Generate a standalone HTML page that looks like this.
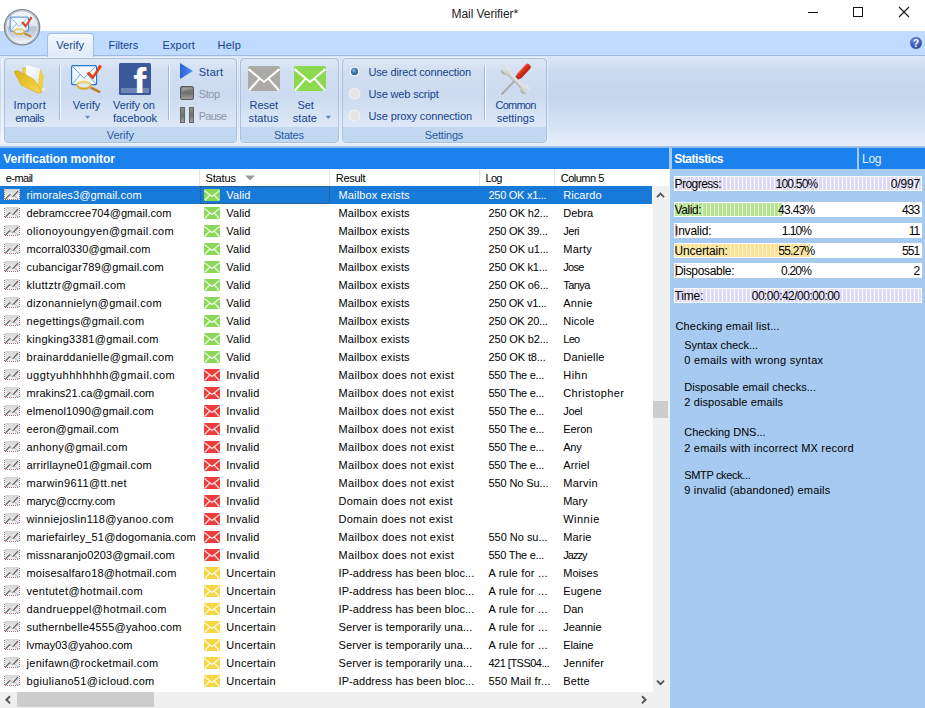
<!DOCTYPE html>
<html><head><meta charset="utf-8"><title>Mail Verifier*</title>
<style>
html,body{margin:0;padding:0}
body{width:925px;height:708px;overflow:hidden;position:relative;background:#fff;font-family:"Liberation Sans",sans-serif;font-size:11px;color:#15428b}
.abs,.tx,svg.a{position:absolute}
.tx{white-space:pre}
#title{left:0;top:0;width:925px;height:31px;background:#fff}
#tabs{left:0;top:31px;width:925px;height:25px;background:#bfdbff}
#tabv{position:absolute;left:47px;top:33px;width:45px;height:23px;border:1px solid #a3bfe4;border-bottom:none;border-radius:4px 4px 0 0;background:linear-gradient(#f3f8fe,#dfeaf8)}
#ribbon{left:0;top:55px;width:925px;height:93px;background:linear-gradient(#dde8f6 0%,#cbdbef 16%,#c4d5ec 45%,#d6e4f5 78%,#e3edfa 92%,#e6effb 100%);border-top:1px solid #9ebae1;box-sizing:border-box}
.grp{position:absolute;top:58px;height:85px;border:1px solid #a9c1de;border-radius:4px;box-sizing:border-box;background:linear-gradient(#dee8f5 0%,#d0def1 18%,#ccdbf0 45%,#dce8f7 80%);overflow:hidden;box-shadow:0 0 0 1px rgba(255,255,255,.45)}
.grp .lab{position:absolute;left:0;right:0;bottom:0;height:15px;background:#c2d8f0}
.vsep{position:absolute;top:65px;width:1px;height:55px;background:#a3b8d6;box-shadow:1px 0 0 rgba(255,255,255,.85)}
#vmhead{left:0;top:148px;width:669px;height:21px;background:#1b81ec}
#sthead{left:672px;top:148px;width:185px;height:21px;background:#1b81ec}
#loghead{left:859px;top:148px;width:66px;height:21px;background:#1b81ec}
#colhead{left:0;top:169px;width:669px;height:17px;background:#fff}
#colhead i{position:absolute;top:0;width:1px;height:17px;background:#e5e5e5}
#list{left:0;top:186px;width:653px;height:506px;background:#fff}
.row{position:relative;height:18px;width:652px;color:#000;font-size:11px;line-height:18px;white-space:nowrap}
.row span{position:absolute;top:0}
.row.sel{background:#1779d8;color:#fff}
.ic{position:absolute;left:4px;top:3px;width:16px;height:11px}
.env{position:absolute;left:204px;top:3px;width:16px;height:12px}
.c1{left:26px;letter-spacing:.15px}.c2{left:226px;letter-spacing:.3px}.c3{left:338px;letter-spacing:.3px}.c4{left:488px;letter-spacing:.3px}.c5{left:563px;letter-spacing:.3px}
#vs{left:653px;top:186px;width:16px;height:506px;background:#f0f0f0}
#hs{left:0;top:692px;width:669px;height:16px;background:#f0f0f0}
#right{left:669px;top:148px;width:256px;height:560px;background:#a6caf0}
.bar{position:absolute;left:674px;width:248px;height:15px;background:#fff;box-sizing:border-box;border:1px solid #fff}
.bar i{position:absolute;left:0;top:0;height:13px}
.lav{background:repeating-linear-gradient(90deg,#dcd8f6 0,#dcd8f6 3px,#fff 3px,#fff 4px)}
.grn{background:repeating-linear-gradient(90deg,#b6e48e 0,#b6e48e 3px,#e6f6d8 3px,#e6f6d8 4px)}
.yel{background:repeating-linear-gradient(90deg,#fae394 0,#fae394 3px,#fdf5d6 3px,#fdf5d6 4px)}
</style></head><body>
<div id="title" class="abs"></div>
<span class="tx" style="left:451.50px;top:7px;font-size:12px;line-height:14px;color:#222;font-weight:normal;letter-spacing:-0.058px">Mail Verifier*</span>
<svg class="a" style="left:800px;top:0" width="125" height="30" viewBox="800 0 125 30"><path d="M808 12.5H818" stroke="#111" stroke-width="1" fill="none"/><rect x="853.5" y="7.5" width="9" height="9" fill="none" stroke="#111" stroke-width="1"/><path d="M899 7L909 17M909 7L899 17" stroke="#111" stroke-width="1.1" fill="none"/></svg>
<div id="tabs" class="abs"></div>
<div id="ribbon" class="abs"></div><div class="abs" style="left:0;top:146px;width:925px;height:2px;background:linear-gradient(#a9c4e6,#8fb4e6)"></div><div class="abs" style="left:1px;top:58px;width:2px;height:86px;background:rgba(255,255,255,.55)"></div>
<div id="tabv"></div>
<span class="tx" style="left:56.25px;top:39px;font-size:11px;line-height:12px;color:#15428b;font-weight:normal;letter-spacing:0.057px">Verify</span><span class="tx" style="left:108.50px;top:39px;font-size:11px;line-height:12px;color:#15428b;font-weight:normal;letter-spacing:-0.042px">Filters</span><span class="tx" style="left:162.50px;top:39px;font-size:11px;line-height:12px;color:#15428b;font-weight:normal;letter-spacing:0.081px">Export</span><span class="tx" style="left:217.50px;top:39px;font-size:11px;line-height:12px;color:#15428b;font-weight:normal;letter-spacing:0.225px">Help</span>
<!--help icon-->
<svg class="a" style="left:908px;top:35px" width="16" height="16" viewBox="0 0 16 16"><defs><radialGradient id="hg" cx=".4" cy=".3" r=".8"><stop offset="0" stop-color="#5d86d8"/><stop offset="1" stop-color="#1f3f9c"/></radialGradient></defs><circle cx="8" cy="8" r="6.4" fill="url(#hg)" stroke="#dfe9fb" stroke-width=".8"/><text x="8" y="11.8" font-family="Liberation Sans, sans-serif" font-weight="bold" font-size="10.5" fill="#fff" text-anchor="middle">?</text></svg>
<!--orb-->
<svg class="a" style="left:2px;top:7px" width="40" height="40" viewBox="2 7 40 40"><defs><linearGradient id="og" x1="0" y1="0" x2="0" y2="1"><stop offset="0" stop-color="#f3f5f9"/><stop offset=".44" stop-color="#e2e6ee"/><stop offset=".5" stop-color="#bac3d3"/><stop offset=".78" stop-color="#cdd5e2"/><stop offset="1" stop-color="#f0f4fa"/></linearGradient><linearGradient id="or" x1="0" y1="0" x2="0" y2="1"><stop offset="0" stop-color="#c2c8d4"/><stop offset=".5" stop-color="#aab2c2"/><stop offset="1" stop-color="#dfe5ef"/></linearGradient></defs>
<circle cx="22.05" cy="27.2" r="17.7" fill="url(#or)" stroke="#7f8797" stroke-width="1.2"/><circle cx="22.05" cy="27.2" r="15.4" fill="url(#og)" stroke="#f6f8fb" stroke-opacity=".85" stroke-width=".9"/>
<g transform="translate(9.0,15.2) scale(.735)"><defs><linearGradient id="mg1" x1="0" y1="0" x2="0" y2="1"><stop offset="0" stop-color="#b9c4d2"/><stop offset=".5" stop-color="#eef2f7"/><stop offset="1" stop-color="#c3ccd8"/></linearGradient><linearGradient id="rg3" x1="0" y1="0" x2="0" y2="1"><stop offset="0" stop-color="#f3d862"/><stop offset="1" stop-color="#d9a520"/></linearGradient></defs><rect x="1.6" y="2.6" width="25" height="19" rx="1.2" fill="#f1f9ff" stroke="#2674cb" stroke-width="1.15"/><path d="M2 3 L14 15.2 L26.2 3 M2.2 21.2 L10.4 11.6 M26 21.2 L17.8 11.6" stroke="#4a8fd6" stroke-width=".8" fill="none"/><path d="M16.6 10.4 L19.2 8.6 L22.8 12.6 L29.6 1.6 L32 3.4 L23 16.6 Z" fill="#e5401d"/><path d="M21.5 25 L29.4 28.8" stroke="#b98430" stroke-width="2.5" stroke-linecap="round" fill="none"/><ellipse cx="13.9" cy="22.1" rx="6.7" ry="3.6" fill="url(#mg1)" stroke="url(#rg3)" stroke-width="2.1"/></g></svg>
<!--groups-->
<div class="grp" style="left:4px;width:233px"><div class="lab"></div></div>
<div class="grp" style="left:240px;width:99px"><div class="lab"></div></div>
<div class="grp" style="left:342px;width:205px"><div class="lab"></div></div>
<span class="tx" style="left:106.75px;top:129px;font-size:11px;line-height:12px;color:#2b589f;font-weight:normal;letter-spacing:-0.063px">Verify</span><span class="tx" style="left:274.00px;top:129px;font-size:11px;line-height:12px;color:#2b589f;font-weight:normal;letter-spacing:-0.237px">States</span><span class="tx" style="left:424.75px;top:129px;font-size:11px;line-height:12px;color:#2b589f;font-weight:normal;letter-spacing:-0.164px">Settings</span>
<div class="vsep" style="left:59px"></div><div class="vsep" style="left:168px"></div><div class="vsep" style="left:484px"></div>
<!--import folder-->
<svg class="a" style="left:14px;top:63px" width="32" height="32" viewBox="14 63 32 32"><defs><linearGradient id="fg" x1="0" y1="0" x2="1" y2="1"><stop offset="0" stop-color="#dcb116"/><stop offset=".6" stop-color="#ecc836"/><stop offset="1" stop-color="#f6da58"/></linearGradient><linearGradient id="pg" x1="0" y1="0" x2="1" y2="1"><stop offset="0" stop-color="#ffffff"/><stop offset="1" stop-color="#dfe7f3"/></linearGradient></defs>
<path d="M22 68.3 L25.5 67.6 L40 69.4 L43.2 76 L41.6 92.6 L37 90 L24 75 Z" fill="#efcf48" stroke="#cfa72a" stroke-width=".5"/>
<path d="M25.6 65 L40.2 68.4 L41 73 L37.5 87.5 L26.5 77 Z" fill="url(#pg)"/>
<path d="M40.2 68.4 L43.2 76 L41.6 92.6 L37.3 88 Z" fill="#f0cf40"/>
<path d="M14 71.6 L17.5 70.6 L33.5 79 L36 82 L41.6 92.6 L38 93.2 L21 85 Z" fill="url(#fg)" stroke="#c9a020" stroke-width=".5"/>
<path d="M42.5 88 L45.8 89.5 L42 91 Z" fill="#f4f7fb"/></svg>
<!--verify icon-->
<svg class="a" style="left:70px;top:63px" width="32" height="32" viewBox="0 0 32 32"><defs><linearGradient id="mg" x1="0" y1="0" x2="0" y2="1"><stop offset="0" stop-color="#b9c4d2"/><stop offset=".5" stop-color="#eef2f7"/><stop offset="1" stop-color="#c3ccd8"/></linearGradient><linearGradient id="rg2" x1="0" y1="0" x2="0" y2="1"><stop offset="0" stop-color="#f3d862"/><stop offset="1" stop-color="#d9a520"/></linearGradient></defs><rect x="1.6" y="2.6" width="25" height="19" rx="1.2" fill="#f1f9ff" stroke="#2674cb" stroke-width="1.15"/><path d="M2 3 L14 15.2 L26.2 3 M2.2 21.2 L10.4 11.6 M26 21.2 L17.8 11.6" stroke="#4a8fd6" stroke-width=".8" fill="none"/><path d="M16.6 10.4 L19.2 8.6 L22.8 12.6 L29.6 1.6 L32 3.4 L23 16.6 Z" fill="#e5401d"/><path d="M21.5 25 L29.4 28.8" stroke="#b98430" stroke-width="2.5" stroke-linecap="round" fill="none"/><ellipse cx="13.9" cy="22.1" rx="6.7" ry="3.6" fill="url(#mg)" stroke="url(#rg2)" stroke-width="2.1"/></svg>
<!--facebook-->
<svg class="a" style="left:119px;top:63px" width="32" height="32" viewBox="0 0 32 32"><rect width="32" height="32" rx="1.6" fill="#3b5998"/><rect x="1.9" y="25" width="28.2" height="5" fill="#6d84b4"/><clipPath id="fc"><rect x="0" y="0" width="32" height="30"/></clipPath><g clip-path="url(#fc)"><text transform="translate(14.2,34.4) scale(1.12,1.14)" x="0" y="0" font-family="Liberation Sans, sans-serif" font-weight="bold" font-size="35" fill="#fff">f</text></g></svg>
<!--play/stop/pause-->
<svg class="a" style="left:178px;top:61px" width="20" height="64" viewBox="178 61 20 64"><defs><linearGradient id="plg" x1="0" y1="0" x2="1" y2="0"><stop offset="0" stop-color="#2a62d6"/><stop offset="1" stop-color="#5590f2"/></linearGradient><linearGradient id="stg" x1="0" y1="0" x2="0" y2="1"><stop offset="0" stop-color="#8f8f8f"/><stop offset=".5" stop-color="#6f6f6f"/><stop offset="1" stop-color="#a2a2a2"/></linearGradient></defs>
<path d="M180 63 L193 71 L180 79 Z" fill="url(#plg)"/>
<rect x="180.5" y="86.5" width="13" height="13" rx="1.5" fill="url(#stg)" stroke="#585858"/><path d="M182 93.5 Q184 89 192 88.5 L192 88 L182 88 Z" fill="#fff" fill-opacity=".18"/>
<rect x="180.5" y="107.5" width="4" height="15" fill="url(#stg)" stroke="#666"/><rect x="189.5" y="107.5" width="4" height="15" fill="url(#stg)" stroke="#666"/></svg>
<span class="tx" style="left:198.75px;top:66px;font-size:11px;line-height:12px;color:#15428b;font-weight:normal;letter-spacing:0.266px">Start</span><span class="tx" style="left:198.75px;top:88px;font-size:11px;line-height:12px;color:#8d97a8;font-weight:normal;letter-spacing:-0.447px">Stop</span><span class="tx" style="left:198.75px;top:110px;font-size:11px;line-height:12px;color:#8d97a8;font-weight:normal;letter-spacing:-0.751px">Pause</span>
<span class="tx" style="left:13.50px;top:99px;font-size:11px;line-height:12px;color:#15428b;font-weight:normal;letter-spacing:0.222px">Import</span><span class="tx" style="left:15.25px;top:112px;font-size:11px;line-height:12px;color:#15428b;font-weight:normal;letter-spacing:-0.519px">emails</span>
<span class="tx" style="left:72.75px;top:99px;font-size:11px;line-height:12px;color:#15428b;font-weight:normal;letter-spacing:0.017px">Verify</span>
<span class="tx" style="left:113.00px;top:99px;font-size:11px;line-height:12px;color:#15428b;font-weight:normal;letter-spacing:-0.102px">Verify on</span><span class="tx" style="left:113.00px;top:112px;font-size:11px;line-height:12px;color:#15428b;font-weight:normal;letter-spacing:-0.094px">facebook</span>
<svg class="a" style="left:84px;top:115px" width="7" height="5" viewBox="0 0 7 5"><path d="M.8 .8 L6.2 .8 L3.5 4 Z" fill="#6a8fc4"/></svg>
<!--big envelopes-->
<svg class="a" style="left:248px;top:66px" width="32" height="25" viewBox="0 0 32 25"><rect width="32" height="25" rx="2" fill="#acaaa6"/><path d="M.5 3 L16 16 L31.5 3 M1 24.5 L11.5 12.6 M31 24.5 L20.5 12.6" stroke="#fff" stroke-width="2.1" fill="none"/></svg>
<svg class="a" style="left:294px;top:66px" width="32" height="25" viewBox="0 0 32 25"><rect width="32" height="25" rx="2" fill="#8bd94f"/><path d="M.5 3 L16 16 L31.5 3 M1 24.5 L11.5 12.6 M31 24.5 L20.5 12.6" stroke="#fff" stroke-width="2.1" fill="none"/></svg>
<span class="tx" style="left:249.50px;top:99px;font-size:11px;line-height:12px;color:#15428b;font-weight:normal;letter-spacing:-0.038px">Reset</span><span class="tx" style="left:248.50px;top:112px;font-size:11px;line-height:12px;color:#15428b;font-weight:normal;letter-spacing:0.128px">status</span><span class="tx" style="left:297.50px;top:99px;font-size:11px;line-height:12px;color:#15428b;font-weight:normal;letter-spacing:-0.158px">Set</span><span class="tx" style="left:292.75px;top:112px;font-size:11px;line-height:12px;color:#15428b;font-weight:normal;letter-spacing:0.085px">state</span>
<svg class="a" style="left:325px;top:115px" width="7" height="5" viewBox="0 0 7 5"><path d="M.6 .8 L6 .8 L3.3 4 Z" fill="#5f86bf"/></svg>
<!--radios-->
<svg class="a" style="left:346px;top:63px" width="18" height="62" viewBox="346 63 18 62"><defs><radialGradient id="rg" cx=".4" cy=".35" r=".7"><stop offset="0" stop-color="#8fc0e6"/><stop offset=".5" stop-color="#3f7cb8"/><stop offset="1" stop-color="#2a5a94"/></radialGradient></defs>
<circle cx="354.5" cy="71.4" r="5.6" fill="#f4f7fb" stroke="#c3cfdf" stroke-width=".8"/><circle cx="354.5" cy="71.4" r="3.6" fill="url(#rg)"/>
<circle cx="354.5" cy="93.6" r="5.4" fill="#e6e6e6" stroke="#eef2f8" stroke-width="1.2"/>
<circle cx="354.5" cy="115.6" r="5.4" fill="#e6e6e6" stroke="#eef2f8" stroke-width="1.2"/></svg>
<span class="tx" style="left:368.50px;top:66px;font-size:11px;line-height:12px;color:#15428b;font-weight:normal;letter-spacing:-0.164px">Use direct connection</span><span class="tx" style="left:368.50px;top:88px;font-size:11px;line-height:12px;color:#15428b;font-weight:normal;letter-spacing:-0.149px">Use web script</span><span class="tx" style="left:368.50px;top:110px;font-size:11px;line-height:12px;color:#15428b;font-weight:normal;letter-spacing:-0.120px">Use proxy connection</span>
<!--tools-->
<svg class="a" style="left:498px;top:61px" width="36" height="36" viewBox="498 61 36 36"><defs><mask id="wm"><rect x="-30" y="-30" width="60" height="60" fill="#fff"/><rect x="-20" y="-1.6" width="6.8" height="3.2" fill="#000" transform="rotate(-14 -14 0)"/><rect x="13.2" y="-1.6" width="6.8" height="3.2" fill="#000" transform="rotate(-14 14 0)"/></mask><linearGradient id="wg" x1="0" y1="0" x2="0" y2="1"><stop offset="0" stop-color="#ecece8"/><stop offset=".6" stop-color="#d2d2cc"/><stop offset="1" stop-color="#a9a9a3"/></linearGradient><linearGradient id="hg2" x1="0" y1="0" x2="0" y2="1"><stop offset="0" stop-color="#f0543c"/><stop offset=".45" stop-color="#e0341f"/><stop offset="1" stop-color="#b5200f"/></linearGradient></defs>
<path d="M517.2 78.2 L502 94" stroke="#a9a9a9" stroke-width="1.9" fill="none" stroke-linecap="round"/>
<g transform="translate(523.6,71.2) rotate(-46.5)"><rect x="-8.6" y="-3.1" width="17.4" height="6.2" rx="2.6" fill="url(#hg2)"/><path d="M-6 -1 H7 M-6 1.2 H7" stroke="#a81c0c" stroke-width=".7" fill="none"/><rect x="-9.6" y="-2.2" width="2" height="4.4" fill="#9c2a1a"/></g>
<g transform="translate(515.2,80) rotate(45)" mask="url(#wm)"><rect x="-12" y="-2.1" width="24" height="4.2" fill="url(#wg)"/><circle cx="-13.6" cy="0" r="4.7" fill="url(#wg)"/><circle cx="13.6" cy="0" r="4.7" fill="url(#wg)"/></g>
</svg>
<span class="tx" style="left:495.50px;top:99px;font-size:11px;line-height:12px;color:#15428b;font-weight:normal;letter-spacing:-0.765px">Common</span><span class="tx" style="left:496.75px;top:112px;font-size:11px;line-height:12px;color:#15428b;font-weight:normal;letter-spacing:-0.032px">settings</span>
<!--panel heads-->
<div id="right" class="abs"></div>
<div id="vmhead" class="abs"></div><div id="sthead" class="abs"></div><div id="loghead" class="abs"></div>
<span class="tx" style="left:3.25px;top:152px;font-size:12px;line-height:14px;color:#fff;font-weight:bold;letter-spacing:-0.052px">Verification monitor</span><span class="tx" style="left:674.25px;top:152px;font-size:12px;line-height:14px;color:#fff;font-weight:bold;letter-spacing:-0.451px">Statistics</span><span class="tx" style="left:862.00px;top:152px;font-size:12px;line-height:14px;color:#e4f0ff;font-weight:normal;letter-spacing:-0.266px">Log</span>
<div id="colhead" class="abs"><i style="left:199px"></i><i style="left:329px"></i><i style="left:479px"></i><i style="left:554px"></i>
<svg class="a" style="left:245px;top:6px" width="10" height="6" viewBox="0 0 10 6"><path d="M0 .5 L10 .5 L5 5.5 Z" fill="#9a9a9a"/></svg></div>
<span class="tx" style="left:5.75px;top:172px;font-size:11px;line-height:12px;color:#000;font-weight:normal;letter-spacing:-0.531px">e-mail</span><span class="tx" style="left:205.50px;top:172px;font-size:11px;line-height:12px;color:#000;font-weight:normal;letter-spacing:-0.157px">Status</span><span class="tx" style="left:335.75px;top:172px;font-size:11px;line-height:12px;color:#000;font-weight:normal;letter-spacing:-0.277px">Result</span><span class="tx" style="left:485.50px;top:172px;font-size:11px;line-height:12px;color:#000;font-weight:normal;letter-spacing:-0.730px">Log</span><span class="tx" style="left:560.75px;top:172px;font-size:11px;line-height:12px;color:#000;font-weight:normal;letter-spacing:-0.511px">Column 5</span>
<svg class="a" width="0" height="0"><defs><linearGradient id="sg" x1="0" y1="0" x2="0" y2="1"><stop offset="0" stop-color="#d6d6d6"/><stop offset="1" stop-color="#f1f1f1"/></linearGradient></defs></svg>
<div id="list" class="abs">
<div class="row sel"><svg class="ic" viewBox="0 0 16 11"><rect x="0" y="0" width="16" height="11" fill="#fff" fill-opacity=".85"/><rect x="1" y="0" width="14" height="10" fill="url(#sg)"/><path d="M9.8 6.6L14.6 10.4" stroke="#b4b4b4" stroke-width="1" fill="none"/><path d="M1.6 9.8L6 5.4M9.2 7.4L14 2.2" stroke="#555" stroke-width="1.15" fill="none"/><path d="M6 5.4L8 7.6L9.2 7.4" stroke="#999" stroke-width=".9" fill="none"/><path d="M.5 1v1M.5 5v1M.5 9v1M3 10.5h1M7 10.5h1M11 10.5h1M15.5 9v1M15.5 5v1M15.5 1v1" stroke="#c4635c" fill="none"/><path d="M.5 3v1M.5 7v1M1 10.5h1M5 10.5h1M9 10.5h1M13 10.5h1M15.5 7v1M15.5 3v1" stroke="#6f80b6" fill="none"/></svg><svg class="env" viewBox="0 0 16 12"><rect x="0" y="0" width="16" height="12" rx="1.3" fill="#8bd858"/><path d="M0.3 1.4 L8 7.4 L15.7 1.4 M0.8 11.2 L5.9 6 M15.2 11.2 L10.1 6" stroke="#fff" stroke-opacity=".88" stroke-width="1.25" fill="none"/></svg></div>
<div class="row"><svg class="ic" viewBox="0 0 16 11"><rect x="0" y="0" width="16" height="11" fill="#fff" fill-opacity=".85"/><rect x="1" y="0" width="14" height="10" fill="url(#sg)"/><path d="M9.8 6.6L14.6 10.4" stroke="#b4b4b4" stroke-width="1" fill="none"/><path d="M1.6 9.8L6 5.4M9.2 7.4L14 2.2" stroke="#555" stroke-width="1.15" fill="none"/><path d="M6 5.4L8 7.6L9.2 7.4" stroke="#999" stroke-width=".9" fill="none"/><path d="M.5 1v1M.5 5v1M.5 9v1M3 10.5h1M7 10.5h1M11 10.5h1M15.5 9v1M15.5 5v1M15.5 1v1" stroke="#c4635c" fill="none"/><path d="M.5 3v1M.5 7v1M1 10.5h1M5 10.5h1M9 10.5h1M13 10.5h1M15.5 7v1M15.5 3v1" stroke="#6f80b6" fill="none"/></svg><svg class="env" viewBox="0 0 16 12"><rect x="0" y="0" width="16" height="12" rx="1.3" fill="#8bd858"/><path d="M0.3 1.4 L8 7.4 L15.7 1.4 M0.8 11.2 L5.9 6 M15.2 11.2 L10.1 6" stroke="#fff" stroke-opacity=".88" stroke-width="1.25" fill="none"/></svg></div>
<div class="row"><svg class="ic" viewBox="0 0 16 11"><rect x="0" y="0" width="16" height="11" fill="#fff" fill-opacity=".85"/><rect x="1" y="0" width="14" height="10" fill="url(#sg)"/><path d="M9.8 6.6L14.6 10.4" stroke="#b4b4b4" stroke-width="1" fill="none"/><path d="M1.6 9.8L6 5.4M9.2 7.4L14 2.2" stroke="#555" stroke-width="1.15" fill="none"/><path d="M6 5.4L8 7.6L9.2 7.4" stroke="#999" stroke-width=".9" fill="none"/><path d="M.5 1v1M.5 5v1M.5 9v1M3 10.5h1M7 10.5h1M11 10.5h1M15.5 9v1M15.5 5v1M15.5 1v1" stroke="#c4635c" fill="none"/><path d="M.5 3v1M.5 7v1M1 10.5h1M5 10.5h1M9 10.5h1M13 10.5h1M15.5 7v1M15.5 3v1" stroke="#6f80b6" fill="none"/></svg><svg class="env" viewBox="0 0 16 12"><rect x="0" y="0" width="16" height="12" rx="1.3" fill="#8bd858"/><path d="M0.3 1.4 L8 7.4 L15.7 1.4 M0.8 11.2 L5.9 6 M15.2 11.2 L10.1 6" stroke="#fff" stroke-opacity=".88" stroke-width="1.25" fill="none"/></svg></div>
<div class="row"><svg class="ic" viewBox="0 0 16 11"><rect x="0" y="0" width="16" height="11" fill="#fff" fill-opacity=".85"/><rect x="1" y="0" width="14" height="10" fill="url(#sg)"/><path d="M9.8 6.6L14.6 10.4" stroke="#b4b4b4" stroke-width="1" fill="none"/><path d="M1.6 9.8L6 5.4M9.2 7.4L14 2.2" stroke="#555" stroke-width="1.15" fill="none"/><path d="M6 5.4L8 7.6L9.2 7.4" stroke="#999" stroke-width=".9" fill="none"/><path d="M.5 1v1M.5 5v1M.5 9v1M3 10.5h1M7 10.5h1M11 10.5h1M15.5 9v1M15.5 5v1M15.5 1v1" stroke="#c4635c" fill="none"/><path d="M.5 3v1M.5 7v1M1 10.5h1M5 10.5h1M9 10.5h1M13 10.5h1M15.5 7v1M15.5 3v1" stroke="#6f80b6" fill="none"/></svg><svg class="env" viewBox="0 0 16 12"><rect x="0" y="0" width="16" height="12" rx="1.3" fill="#8bd858"/><path d="M0.3 1.4 L8 7.4 L15.7 1.4 M0.8 11.2 L5.9 6 M15.2 11.2 L10.1 6" stroke="#fff" stroke-opacity=".88" stroke-width="1.25" fill="none"/></svg></div>
<div class="row"><svg class="ic" viewBox="0 0 16 11"><rect x="0" y="0" width="16" height="11" fill="#fff" fill-opacity=".85"/><rect x="1" y="0" width="14" height="10" fill="url(#sg)"/><path d="M9.8 6.6L14.6 10.4" stroke="#b4b4b4" stroke-width="1" fill="none"/><path d="M1.6 9.8L6 5.4M9.2 7.4L14 2.2" stroke="#555" stroke-width="1.15" fill="none"/><path d="M6 5.4L8 7.6L9.2 7.4" stroke="#999" stroke-width=".9" fill="none"/><path d="M.5 1v1M.5 5v1M.5 9v1M3 10.5h1M7 10.5h1M11 10.5h1M15.5 9v1M15.5 5v1M15.5 1v1" stroke="#c4635c" fill="none"/><path d="M.5 3v1M.5 7v1M1 10.5h1M5 10.5h1M9 10.5h1M13 10.5h1M15.5 7v1M15.5 3v1" stroke="#6f80b6" fill="none"/></svg><svg class="env" viewBox="0 0 16 12"><rect x="0" y="0" width="16" height="12" rx="1.3" fill="#8bd858"/><path d="M0.3 1.4 L8 7.4 L15.7 1.4 M0.8 11.2 L5.9 6 M15.2 11.2 L10.1 6" stroke="#fff" stroke-opacity=".88" stroke-width="1.25" fill="none"/></svg></div>
<div class="row"><svg class="ic" viewBox="0 0 16 11"><rect x="0" y="0" width="16" height="11" fill="#fff" fill-opacity=".85"/><rect x="1" y="0" width="14" height="10" fill="url(#sg)"/><path d="M9.8 6.6L14.6 10.4" stroke="#b4b4b4" stroke-width="1" fill="none"/><path d="M1.6 9.8L6 5.4M9.2 7.4L14 2.2" stroke="#555" stroke-width="1.15" fill="none"/><path d="M6 5.4L8 7.6L9.2 7.4" stroke="#999" stroke-width=".9" fill="none"/><path d="M.5 1v1M.5 5v1M.5 9v1M3 10.5h1M7 10.5h1M11 10.5h1M15.5 9v1M15.5 5v1M15.5 1v1" stroke="#c4635c" fill="none"/><path d="M.5 3v1M.5 7v1M1 10.5h1M5 10.5h1M9 10.5h1M13 10.5h1M15.5 7v1M15.5 3v1" stroke="#6f80b6" fill="none"/></svg><svg class="env" viewBox="0 0 16 12"><rect x="0" y="0" width="16" height="12" rx="1.3" fill="#8bd858"/><path d="M0.3 1.4 L8 7.4 L15.7 1.4 M0.8 11.2 L5.9 6 M15.2 11.2 L10.1 6" stroke="#fff" stroke-opacity=".88" stroke-width="1.25" fill="none"/></svg></div>
<div class="row"><svg class="ic" viewBox="0 0 16 11"><rect x="0" y="0" width="16" height="11" fill="#fff" fill-opacity=".85"/><rect x="1" y="0" width="14" height="10" fill="url(#sg)"/><path d="M9.8 6.6L14.6 10.4" stroke="#b4b4b4" stroke-width="1" fill="none"/><path d="M1.6 9.8L6 5.4M9.2 7.4L14 2.2" stroke="#555" stroke-width="1.15" fill="none"/><path d="M6 5.4L8 7.6L9.2 7.4" stroke="#999" stroke-width=".9" fill="none"/><path d="M.5 1v1M.5 5v1M.5 9v1M3 10.5h1M7 10.5h1M11 10.5h1M15.5 9v1M15.5 5v1M15.5 1v1" stroke="#c4635c" fill="none"/><path d="M.5 3v1M.5 7v1M1 10.5h1M5 10.5h1M9 10.5h1M13 10.5h1M15.5 7v1M15.5 3v1" stroke="#6f80b6" fill="none"/></svg><svg class="env" viewBox="0 0 16 12"><rect x="0" y="0" width="16" height="12" rx="1.3" fill="#8bd858"/><path d="M0.3 1.4 L8 7.4 L15.7 1.4 M0.8 11.2 L5.9 6 M15.2 11.2 L10.1 6" stroke="#fff" stroke-opacity=".88" stroke-width="1.25" fill="none"/></svg></div>
<div class="row"><svg class="ic" viewBox="0 0 16 11"><rect x="0" y="0" width="16" height="11" fill="#fff" fill-opacity=".85"/><rect x="1" y="0" width="14" height="10" fill="url(#sg)"/><path d="M9.8 6.6L14.6 10.4" stroke="#b4b4b4" stroke-width="1" fill="none"/><path d="M1.6 9.8L6 5.4M9.2 7.4L14 2.2" stroke="#555" stroke-width="1.15" fill="none"/><path d="M6 5.4L8 7.6L9.2 7.4" stroke="#999" stroke-width=".9" fill="none"/><path d="M.5 1v1M.5 5v1M.5 9v1M3 10.5h1M7 10.5h1M11 10.5h1M15.5 9v1M15.5 5v1M15.5 1v1" stroke="#c4635c" fill="none"/><path d="M.5 3v1M.5 7v1M1 10.5h1M5 10.5h1M9 10.5h1M13 10.5h1M15.5 7v1M15.5 3v1" stroke="#6f80b6" fill="none"/></svg><svg class="env" viewBox="0 0 16 12"><rect x="0" y="0" width="16" height="12" rx="1.3" fill="#8bd858"/><path d="M0.3 1.4 L8 7.4 L15.7 1.4 M0.8 11.2 L5.9 6 M15.2 11.2 L10.1 6" stroke="#fff" stroke-opacity=".88" stroke-width="1.25" fill="none"/></svg></div>
<div class="row"><svg class="ic" viewBox="0 0 16 11"><rect x="0" y="0" width="16" height="11" fill="#fff" fill-opacity=".85"/><rect x="1" y="0" width="14" height="10" fill="url(#sg)"/><path d="M9.8 6.6L14.6 10.4" stroke="#b4b4b4" stroke-width="1" fill="none"/><path d="M1.6 9.8L6 5.4M9.2 7.4L14 2.2" stroke="#555" stroke-width="1.15" fill="none"/><path d="M6 5.4L8 7.6L9.2 7.4" stroke="#999" stroke-width=".9" fill="none"/><path d="M.5 1v1M.5 5v1M.5 9v1M3 10.5h1M7 10.5h1M11 10.5h1M15.5 9v1M15.5 5v1M15.5 1v1" stroke="#c4635c" fill="none"/><path d="M.5 3v1M.5 7v1M1 10.5h1M5 10.5h1M9 10.5h1M13 10.5h1M15.5 7v1M15.5 3v1" stroke="#6f80b6" fill="none"/></svg><svg class="env" viewBox="0 0 16 12"><rect x="0" y="0" width="16" height="12" rx="1.3" fill="#8bd858"/><path d="M0.3 1.4 L8 7.4 L15.7 1.4 M0.8 11.2 L5.9 6 M15.2 11.2 L10.1 6" stroke="#fff" stroke-opacity=".88" stroke-width="1.25" fill="none"/></svg></div>
<div class="row"><svg class="ic" viewBox="0 0 16 11"><rect x="0" y="0" width="16" height="11" fill="#fff" fill-opacity=".85"/><rect x="1" y="0" width="14" height="10" fill="url(#sg)"/><path d="M9.8 6.6L14.6 10.4" stroke="#b4b4b4" stroke-width="1" fill="none"/><path d="M1.6 9.8L6 5.4M9.2 7.4L14 2.2" stroke="#555" stroke-width="1.15" fill="none"/><path d="M6 5.4L8 7.6L9.2 7.4" stroke="#999" stroke-width=".9" fill="none"/><path d="M.5 1v1M.5 5v1M.5 9v1M3 10.5h1M7 10.5h1M11 10.5h1M15.5 9v1M15.5 5v1M15.5 1v1" stroke="#c4635c" fill="none"/><path d="M.5 3v1M.5 7v1M1 10.5h1M5 10.5h1M9 10.5h1M13 10.5h1M15.5 7v1M15.5 3v1" stroke="#6f80b6" fill="none"/></svg><svg class="env" viewBox="0 0 16 12"><rect x="0" y="0" width="16" height="12" rx="1.3" fill="#8bd858"/><path d="M0.3 1.4 L8 7.4 L15.7 1.4 M0.8 11.2 L5.9 6 M15.2 11.2 L10.1 6" stroke="#fff" stroke-opacity=".88" stroke-width="1.25" fill="none"/></svg></div>
<div class="row"><svg class="ic" viewBox="0 0 16 11"><rect x="0" y="0" width="16" height="11" fill="#fff" fill-opacity=".85"/><rect x="1" y="0" width="14" height="10" fill="url(#sg)"/><path d="M9.8 6.6L14.6 10.4" stroke="#b4b4b4" stroke-width="1" fill="none"/><path d="M1.6 9.8L6 5.4M9.2 7.4L14 2.2" stroke="#555" stroke-width="1.15" fill="none"/><path d="M6 5.4L8 7.6L9.2 7.4" stroke="#999" stroke-width=".9" fill="none"/><path d="M.5 1v1M.5 5v1M.5 9v1M3 10.5h1M7 10.5h1M11 10.5h1M15.5 9v1M15.5 5v1M15.5 1v1" stroke="#c4635c" fill="none"/><path d="M.5 3v1M.5 7v1M1 10.5h1M5 10.5h1M9 10.5h1M13 10.5h1M15.5 7v1M15.5 3v1" stroke="#6f80b6" fill="none"/></svg><svg class="env" viewBox="0 0 16 12"><rect x="0" y="0" width="16" height="12" rx="1.3" fill="#ee3b3b"/><path d="M0.3 1.4 L8 7.4 L15.7 1.4 M0.8 11.2 L5.9 6 M15.2 11.2 L10.1 6" stroke="#fff" stroke-opacity=".88" stroke-width="1.25" fill="none"/></svg></div>
<div class="row"><svg class="ic" viewBox="0 0 16 11"><rect x="0" y="0" width="16" height="11" fill="#fff" fill-opacity=".85"/><rect x="1" y="0" width="14" height="10" fill="url(#sg)"/><path d="M9.8 6.6L14.6 10.4" stroke="#b4b4b4" stroke-width="1" fill="none"/><path d="M1.6 9.8L6 5.4M9.2 7.4L14 2.2" stroke="#555" stroke-width="1.15" fill="none"/><path d="M6 5.4L8 7.6L9.2 7.4" stroke="#999" stroke-width=".9" fill="none"/><path d="M.5 1v1M.5 5v1M.5 9v1M3 10.5h1M7 10.5h1M11 10.5h1M15.5 9v1M15.5 5v1M15.5 1v1" stroke="#c4635c" fill="none"/><path d="M.5 3v1M.5 7v1M1 10.5h1M5 10.5h1M9 10.5h1M13 10.5h1M15.5 7v1M15.5 3v1" stroke="#6f80b6" fill="none"/></svg><svg class="env" viewBox="0 0 16 12"><rect x="0" y="0" width="16" height="12" rx="1.3" fill="#ee3b3b"/><path d="M0.3 1.4 L8 7.4 L15.7 1.4 M0.8 11.2 L5.9 6 M15.2 11.2 L10.1 6" stroke="#fff" stroke-opacity=".88" stroke-width="1.25" fill="none"/></svg></div>
<div class="row"><svg class="ic" viewBox="0 0 16 11"><rect x="0" y="0" width="16" height="11" fill="#fff" fill-opacity=".85"/><rect x="1" y="0" width="14" height="10" fill="url(#sg)"/><path d="M9.8 6.6L14.6 10.4" stroke="#b4b4b4" stroke-width="1" fill="none"/><path d="M1.6 9.8L6 5.4M9.2 7.4L14 2.2" stroke="#555" stroke-width="1.15" fill="none"/><path d="M6 5.4L8 7.6L9.2 7.4" stroke="#999" stroke-width=".9" fill="none"/><path d="M.5 1v1M.5 5v1M.5 9v1M3 10.5h1M7 10.5h1M11 10.5h1M15.5 9v1M15.5 5v1M15.5 1v1" stroke="#c4635c" fill="none"/><path d="M.5 3v1M.5 7v1M1 10.5h1M5 10.5h1M9 10.5h1M13 10.5h1M15.5 7v1M15.5 3v1" stroke="#6f80b6" fill="none"/></svg><svg class="env" viewBox="0 0 16 12"><rect x="0" y="0" width="16" height="12" rx="1.3" fill="#ee3b3b"/><path d="M0.3 1.4 L8 7.4 L15.7 1.4 M0.8 11.2 L5.9 6 M15.2 11.2 L10.1 6" stroke="#fff" stroke-opacity=".88" stroke-width="1.25" fill="none"/></svg></div>
<div class="row"><svg class="ic" viewBox="0 0 16 11"><rect x="0" y="0" width="16" height="11" fill="#fff" fill-opacity=".85"/><rect x="1" y="0" width="14" height="10" fill="url(#sg)"/><path d="M9.8 6.6L14.6 10.4" stroke="#b4b4b4" stroke-width="1" fill="none"/><path d="M1.6 9.8L6 5.4M9.2 7.4L14 2.2" stroke="#555" stroke-width="1.15" fill="none"/><path d="M6 5.4L8 7.6L9.2 7.4" stroke="#999" stroke-width=".9" fill="none"/><path d="M.5 1v1M.5 5v1M.5 9v1M3 10.5h1M7 10.5h1M11 10.5h1M15.5 9v1M15.5 5v1M15.5 1v1" stroke="#c4635c" fill="none"/><path d="M.5 3v1M.5 7v1M1 10.5h1M5 10.5h1M9 10.5h1M13 10.5h1M15.5 7v1M15.5 3v1" stroke="#6f80b6" fill="none"/></svg><svg class="env" viewBox="0 0 16 12"><rect x="0" y="0" width="16" height="12" rx="1.3" fill="#ee3b3b"/><path d="M0.3 1.4 L8 7.4 L15.7 1.4 M0.8 11.2 L5.9 6 M15.2 11.2 L10.1 6" stroke="#fff" stroke-opacity=".88" stroke-width="1.25" fill="none"/></svg></div>
<div class="row"><svg class="ic" viewBox="0 0 16 11"><rect x="0" y="0" width="16" height="11" fill="#fff" fill-opacity=".85"/><rect x="1" y="0" width="14" height="10" fill="url(#sg)"/><path d="M9.8 6.6L14.6 10.4" stroke="#b4b4b4" stroke-width="1" fill="none"/><path d="M1.6 9.8L6 5.4M9.2 7.4L14 2.2" stroke="#555" stroke-width="1.15" fill="none"/><path d="M6 5.4L8 7.6L9.2 7.4" stroke="#999" stroke-width=".9" fill="none"/><path d="M.5 1v1M.5 5v1M.5 9v1M3 10.5h1M7 10.5h1M11 10.5h1M15.5 9v1M15.5 5v1M15.5 1v1" stroke="#c4635c" fill="none"/><path d="M.5 3v1M.5 7v1M1 10.5h1M5 10.5h1M9 10.5h1M13 10.5h1M15.5 7v1M15.5 3v1" stroke="#6f80b6" fill="none"/></svg><svg class="env" viewBox="0 0 16 12"><rect x="0" y="0" width="16" height="12" rx="1.3" fill="#ee3b3b"/><path d="M0.3 1.4 L8 7.4 L15.7 1.4 M0.8 11.2 L5.9 6 M15.2 11.2 L10.1 6" stroke="#fff" stroke-opacity=".88" stroke-width="1.25" fill="none"/></svg></div>
<div class="row"><svg class="ic" viewBox="0 0 16 11"><rect x="0" y="0" width="16" height="11" fill="#fff" fill-opacity=".85"/><rect x="1" y="0" width="14" height="10" fill="url(#sg)"/><path d="M9.8 6.6L14.6 10.4" stroke="#b4b4b4" stroke-width="1" fill="none"/><path d="M1.6 9.8L6 5.4M9.2 7.4L14 2.2" stroke="#555" stroke-width="1.15" fill="none"/><path d="M6 5.4L8 7.6L9.2 7.4" stroke="#999" stroke-width=".9" fill="none"/><path d="M.5 1v1M.5 5v1M.5 9v1M3 10.5h1M7 10.5h1M11 10.5h1M15.5 9v1M15.5 5v1M15.5 1v1" stroke="#c4635c" fill="none"/><path d="M.5 3v1M.5 7v1M1 10.5h1M5 10.5h1M9 10.5h1M13 10.5h1M15.5 7v1M15.5 3v1" stroke="#6f80b6" fill="none"/></svg><svg class="env" viewBox="0 0 16 12"><rect x="0" y="0" width="16" height="12" rx="1.3" fill="#ee3b3b"/><path d="M0.3 1.4 L8 7.4 L15.7 1.4 M0.8 11.2 L5.9 6 M15.2 11.2 L10.1 6" stroke="#fff" stroke-opacity=".88" stroke-width="1.25" fill="none"/></svg></div>
<div class="row"><svg class="ic" viewBox="0 0 16 11"><rect x="0" y="0" width="16" height="11" fill="#fff" fill-opacity=".85"/><rect x="1" y="0" width="14" height="10" fill="url(#sg)"/><path d="M9.8 6.6L14.6 10.4" stroke="#b4b4b4" stroke-width="1" fill="none"/><path d="M1.6 9.8L6 5.4M9.2 7.4L14 2.2" stroke="#555" stroke-width="1.15" fill="none"/><path d="M6 5.4L8 7.6L9.2 7.4" stroke="#999" stroke-width=".9" fill="none"/><path d="M.5 1v1M.5 5v1M.5 9v1M3 10.5h1M7 10.5h1M11 10.5h1M15.5 9v1M15.5 5v1M15.5 1v1" stroke="#c4635c" fill="none"/><path d="M.5 3v1M.5 7v1M1 10.5h1M5 10.5h1M9 10.5h1M13 10.5h1M15.5 7v1M15.5 3v1" stroke="#6f80b6" fill="none"/></svg><svg class="env" viewBox="0 0 16 12"><rect x="0" y="0" width="16" height="12" rx="1.3" fill="#ee3b3b"/><path d="M0.3 1.4 L8 7.4 L15.7 1.4 M0.8 11.2 L5.9 6 M15.2 11.2 L10.1 6" stroke="#fff" stroke-opacity=".88" stroke-width="1.25" fill="none"/></svg></div>
<div class="row"><svg class="ic" viewBox="0 0 16 11"><rect x="0" y="0" width="16" height="11" fill="#fff" fill-opacity=".85"/><rect x="1" y="0" width="14" height="10" fill="url(#sg)"/><path d="M9.8 6.6L14.6 10.4" stroke="#b4b4b4" stroke-width="1" fill="none"/><path d="M1.6 9.8L6 5.4M9.2 7.4L14 2.2" stroke="#555" stroke-width="1.15" fill="none"/><path d="M6 5.4L8 7.6L9.2 7.4" stroke="#999" stroke-width=".9" fill="none"/><path d="M.5 1v1M.5 5v1M.5 9v1M3 10.5h1M7 10.5h1M11 10.5h1M15.5 9v1M15.5 5v1M15.5 1v1" stroke="#c4635c" fill="none"/><path d="M.5 3v1M.5 7v1M1 10.5h1M5 10.5h1M9 10.5h1M13 10.5h1M15.5 7v1M15.5 3v1" stroke="#6f80b6" fill="none"/></svg><svg class="env" viewBox="0 0 16 12"><rect x="0" y="0" width="16" height="12" rx="1.3" fill="#ee3b3b"/><path d="M0.3 1.4 L8 7.4 L15.7 1.4 M0.8 11.2 L5.9 6 M15.2 11.2 L10.1 6" stroke="#fff" stroke-opacity=".88" stroke-width="1.25" fill="none"/></svg></div>
<div class="row"><svg class="ic" viewBox="0 0 16 11"><rect x="0" y="0" width="16" height="11" fill="#fff" fill-opacity=".85"/><rect x="1" y="0" width="14" height="10" fill="url(#sg)"/><path d="M9.8 6.6L14.6 10.4" stroke="#b4b4b4" stroke-width="1" fill="none"/><path d="M1.6 9.8L6 5.4M9.2 7.4L14 2.2" stroke="#555" stroke-width="1.15" fill="none"/><path d="M6 5.4L8 7.6L9.2 7.4" stroke="#999" stroke-width=".9" fill="none"/><path d="M.5 1v1M.5 5v1M.5 9v1M3 10.5h1M7 10.5h1M11 10.5h1M15.5 9v1M15.5 5v1M15.5 1v1" stroke="#c4635c" fill="none"/><path d="M.5 3v1M.5 7v1M1 10.5h1M5 10.5h1M9 10.5h1M13 10.5h1M15.5 7v1M15.5 3v1" stroke="#6f80b6" fill="none"/></svg><svg class="env" viewBox="0 0 16 12"><rect x="0" y="0" width="16" height="12" rx="1.3" fill="#ee3b3b"/><path d="M0.3 1.4 L8 7.4 L15.7 1.4 M0.8 11.2 L5.9 6 M15.2 11.2 L10.1 6" stroke="#fff" stroke-opacity=".88" stroke-width="1.25" fill="none"/></svg></div>
<div class="row"><svg class="ic" viewBox="0 0 16 11"><rect x="0" y="0" width="16" height="11" fill="#fff" fill-opacity=".85"/><rect x="1" y="0" width="14" height="10" fill="url(#sg)"/><path d="M9.8 6.6L14.6 10.4" stroke="#b4b4b4" stroke-width="1" fill="none"/><path d="M1.6 9.8L6 5.4M9.2 7.4L14 2.2" stroke="#555" stroke-width="1.15" fill="none"/><path d="M6 5.4L8 7.6L9.2 7.4" stroke="#999" stroke-width=".9" fill="none"/><path d="M.5 1v1M.5 5v1M.5 9v1M3 10.5h1M7 10.5h1M11 10.5h1M15.5 9v1M15.5 5v1M15.5 1v1" stroke="#c4635c" fill="none"/><path d="M.5 3v1M.5 7v1M1 10.5h1M5 10.5h1M9 10.5h1M13 10.5h1M15.5 7v1M15.5 3v1" stroke="#6f80b6" fill="none"/></svg><svg class="env" viewBox="0 0 16 12"><rect x="0" y="0" width="16" height="12" rx="1.3" fill="#ee3b3b"/><path d="M0.3 1.4 L8 7.4 L15.7 1.4 M0.8 11.2 L5.9 6 M15.2 11.2 L10.1 6" stroke="#fff" stroke-opacity=".88" stroke-width="1.25" fill="none"/></svg></div>
<div class="row"><svg class="ic" viewBox="0 0 16 11"><rect x="0" y="0" width="16" height="11" fill="#fff" fill-opacity=".85"/><rect x="1" y="0" width="14" height="10" fill="url(#sg)"/><path d="M9.8 6.6L14.6 10.4" stroke="#b4b4b4" stroke-width="1" fill="none"/><path d="M1.6 9.8L6 5.4M9.2 7.4L14 2.2" stroke="#555" stroke-width="1.15" fill="none"/><path d="M6 5.4L8 7.6L9.2 7.4" stroke="#999" stroke-width=".9" fill="none"/><path d="M.5 1v1M.5 5v1M.5 9v1M3 10.5h1M7 10.5h1M11 10.5h1M15.5 9v1M15.5 5v1M15.5 1v1" stroke="#c4635c" fill="none"/><path d="M.5 3v1M.5 7v1M1 10.5h1M5 10.5h1M9 10.5h1M13 10.5h1M15.5 7v1M15.5 3v1" stroke="#6f80b6" fill="none"/></svg><svg class="env" viewBox="0 0 16 12"><rect x="0" y="0" width="16" height="12" rx="1.3" fill="#ee3b3b"/><path d="M0.3 1.4 L8 7.4 L15.7 1.4 M0.8 11.2 L5.9 6 M15.2 11.2 L10.1 6" stroke="#fff" stroke-opacity=".88" stroke-width="1.25" fill="none"/></svg></div>
<div class="row"><svg class="ic" viewBox="0 0 16 11"><rect x="0" y="0" width="16" height="11" fill="#fff" fill-opacity=".85"/><rect x="1" y="0" width="14" height="10" fill="url(#sg)"/><path d="M9.8 6.6L14.6 10.4" stroke="#b4b4b4" stroke-width="1" fill="none"/><path d="M1.6 9.8L6 5.4M9.2 7.4L14 2.2" stroke="#555" stroke-width="1.15" fill="none"/><path d="M6 5.4L8 7.6L9.2 7.4" stroke="#999" stroke-width=".9" fill="none"/><path d="M.5 1v1M.5 5v1M.5 9v1M3 10.5h1M7 10.5h1M11 10.5h1M15.5 9v1M15.5 5v1M15.5 1v1" stroke="#c4635c" fill="none"/><path d="M.5 3v1M.5 7v1M1 10.5h1M5 10.5h1M9 10.5h1M13 10.5h1M15.5 7v1M15.5 3v1" stroke="#6f80b6" fill="none"/></svg><svg class="env" viewBox="0 0 16 12"><rect x="0" y="0" width="16" height="12" rx="1.3" fill="#f7d644"/><path d="M0.3 1.4 L8 7.4 L15.7 1.4 M0.8 11.2 L5.9 6 M15.2 11.2 L10.1 6" stroke="#fff" stroke-opacity=".88" stroke-width="1.25" fill="none"/></svg></div>
<div class="row"><svg class="ic" viewBox="0 0 16 11"><rect x="0" y="0" width="16" height="11" fill="#fff" fill-opacity=".85"/><rect x="1" y="0" width="14" height="10" fill="url(#sg)"/><path d="M9.8 6.6L14.6 10.4" stroke="#b4b4b4" stroke-width="1" fill="none"/><path d="M1.6 9.8L6 5.4M9.2 7.4L14 2.2" stroke="#555" stroke-width="1.15" fill="none"/><path d="M6 5.4L8 7.6L9.2 7.4" stroke="#999" stroke-width=".9" fill="none"/><path d="M.5 1v1M.5 5v1M.5 9v1M3 10.5h1M7 10.5h1M11 10.5h1M15.5 9v1M15.5 5v1M15.5 1v1" stroke="#c4635c" fill="none"/><path d="M.5 3v1M.5 7v1M1 10.5h1M5 10.5h1M9 10.5h1M13 10.5h1M15.5 7v1M15.5 3v1" stroke="#6f80b6" fill="none"/></svg><svg class="env" viewBox="0 0 16 12"><rect x="0" y="0" width="16" height="12" rx="1.3" fill="#f7d644"/><path d="M0.3 1.4 L8 7.4 L15.7 1.4 M0.8 11.2 L5.9 6 M15.2 11.2 L10.1 6" stroke="#fff" stroke-opacity=".88" stroke-width="1.25" fill="none"/></svg></div>
<div class="row"><svg class="ic" viewBox="0 0 16 11"><rect x="0" y="0" width="16" height="11" fill="#fff" fill-opacity=".85"/><rect x="1" y="0" width="14" height="10" fill="url(#sg)"/><path d="M9.8 6.6L14.6 10.4" stroke="#b4b4b4" stroke-width="1" fill="none"/><path d="M1.6 9.8L6 5.4M9.2 7.4L14 2.2" stroke="#555" stroke-width="1.15" fill="none"/><path d="M6 5.4L8 7.6L9.2 7.4" stroke="#999" stroke-width=".9" fill="none"/><path d="M.5 1v1M.5 5v1M.5 9v1M3 10.5h1M7 10.5h1M11 10.5h1M15.5 9v1M15.5 5v1M15.5 1v1" stroke="#c4635c" fill="none"/><path d="M.5 3v1M.5 7v1M1 10.5h1M5 10.5h1M9 10.5h1M13 10.5h1M15.5 7v1M15.5 3v1" stroke="#6f80b6" fill="none"/></svg><svg class="env" viewBox="0 0 16 12"><rect x="0" y="0" width="16" height="12" rx="1.3" fill="#f7d644"/><path d="M0.3 1.4 L8 7.4 L15.7 1.4 M0.8 11.2 L5.9 6 M15.2 11.2 L10.1 6" stroke="#fff" stroke-opacity=".88" stroke-width="1.25" fill="none"/></svg></div>
<div class="row"><svg class="ic" viewBox="0 0 16 11"><rect x="0" y="0" width="16" height="11" fill="#fff" fill-opacity=".85"/><rect x="1" y="0" width="14" height="10" fill="url(#sg)"/><path d="M9.8 6.6L14.6 10.4" stroke="#b4b4b4" stroke-width="1" fill="none"/><path d="M1.6 9.8L6 5.4M9.2 7.4L14 2.2" stroke="#555" stroke-width="1.15" fill="none"/><path d="M6 5.4L8 7.6L9.2 7.4" stroke="#999" stroke-width=".9" fill="none"/><path d="M.5 1v1M.5 5v1M.5 9v1M3 10.5h1M7 10.5h1M11 10.5h1M15.5 9v1M15.5 5v1M15.5 1v1" stroke="#c4635c" fill="none"/><path d="M.5 3v1M.5 7v1M1 10.5h1M5 10.5h1M9 10.5h1M13 10.5h1M15.5 7v1M15.5 3v1" stroke="#6f80b6" fill="none"/></svg><svg class="env" viewBox="0 0 16 12"><rect x="0" y="0" width="16" height="12" rx="1.3" fill="#f7d644"/><path d="M0.3 1.4 L8 7.4 L15.7 1.4 M0.8 11.2 L5.9 6 M15.2 11.2 L10.1 6" stroke="#fff" stroke-opacity=".88" stroke-width="1.25" fill="none"/></svg></div>
<div class="row"><svg class="ic" viewBox="0 0 16 11"><rect x="0" y="0" width="16" height="11" fill="#fff" fill-opacity=".85"/><rect x="1" y="0" width="14" height="10" fill="url(#sg)"/><path d="M9.8 6.6L14.6 10.4" stroke="#b4b4b4" stroke-width="1" fill="none"/><path d="M1.6 9.8L6 5.4M9.2 7.4L14 2.2" stroke="#555" stroke-width="1.15" fill="none"/><path d="M6 5.4L8 7.6L9.2 7.4" stroke="#999" stroke-width=".9" fill="none"/><path d="M.5 1v1M.5 5v1M.5 9v1M3 10.5h1M7 10.5h1M11 10.5h1M15.5 9v1M15.5 5v1M15.5 1v1" stroke="#c4635c" fill="none"/><path d="M.5 3v1M.5 7v1M1 10.5h1M5 10.5h1M9 10.5h1M13 10.5h1M15.5 7v1M15.5 3v1" stroke="#6f80b6" fill="none"/></svg><svg class="env" viewBox="0 0 16 12"><rect x="0" y="0" width="16" height="12" rx="1.3" fill="#f7d644"/><path d="M0.3 1.4 L8 7.4 L15.7 1.4 M0.8 11.2 L5.9 6 M15.2 11.2 L10.1 6" stroke="#fff" stroke-opacity=".88" stroke-width="1.25" fill="none"/></svg></div>
<div class="row"><svg class="ic" viewBox="0 0 16 11"><rect x="0" y="0" width="16" height="11" fill="#fff" fill-opacity=".85"/><rect x="1" y="0" width="14" height="10" fill="url(#sg)"/><path d="M9.8 6.6L14.6 10.4" stroke="#b4b4b4" stroke-width="1" fill="none"/><path d="M1.6 9.8L6 5.4M9.2 7.4L14 2.2" stroke="#555" stroke-width="1.15" fill="none"/><path d="M6 5.4L8 7.6L9.2 7.4" stroke="#999" stroke-width=".9" fill="none"/><path d="M.5 1v1M.5 5v1M.5 9v1M3 10.5h1M7 10.5h1M11 10.5h1M15.5 9v1M15.5 5v1M15.5 1v1" stroke="#c4635c" fill="none"/><path d="M.5 3v1M.5 7v1M1 10.5h1M5 10.5h1M9 10.5h1M13 10.5h1M15.5 7v1M15.5 3v1" stroke="#6f80b6" fill="none"/></svg><svg class="env" viewBox="0 0 16 12"><rect x="0" y="0" width="16" height="12" rx="1.3" fill="#f7d644"/><path d="M0.3 1.4 L8 7.4 L15.7 1.4 M0.8 11.2 L5.9 6 M15.2 11.2 L10.1 6" stroke="#fff" stroke-opacity=".88" stroke-width="1.25" fill="none"/></svg></div>
<div class="row"><svg class="ic" viewBox="0 0 16 11"><rect x="0" y="0" width="16" height="11" fill="#fff" fill-opacity=".85"/><rect x="1" y="0" width="14" height="10" fill="url(#sg)"/><path d="M9.8 6.6L14.6 10.4" stroke="#b4b4b4" stroke-width="1" fill="none"/><path d="M1.6 9.8L6 5.4M9.2 7.4L14 2.2" stroke="#555" stroke-width="1.15" fill="none"/><path d="M6 5.4L8 7.6L9.2 7.4" stroke="#999" stroke-width=".9" fill="none"/><path d="M.5 1v1M.5 5v1M.5 9v1M3 10.5h1M7 10.5h1M11 10.5h1M15.5 9v1M15.5 5v1M15.5 1v1" stroke="#c4635c" fill="none"/><path d="M.5 3v1M.5 7v1M1 10.5h1M5 10.5h1M9 10.5h1M13 10.5h1M15.5 7v1M15.5 3v1" stroke="#6f80b6" fill="none"/></svg><svg class="env" viewBox="0 0 16 12"><rect x="0" y="0" width="16" height="12" rx="1.3" fill="#f7d644"/><path d="M0.3 1.4 L8 7.4 L15.7 1.4 M0.8 11.2 L5.9 6 M15.2 11.2 L10.1 6" stroke="#fff" stroke-opacity=".88" stroke-width="1.25" fill="none"/></svg></div>
</div>
<div class="abs" style="left:200px;top:186px;width:130px;height:18px;box-sizing:border-box;border:1px dotted rgba(70,60,40,.75)"></div>
<span class="tx" style="left:26.50px;top:189px;font-size:11px;line-height:12px;color:#fff;font-weight:normal;letter-spacing:0.129px">rimorales3@gmail.com</span><span class="tx" style="left:226.25px;top:189px;font-size:11px;line-height:12px;color:#fff;font-weight:normal;letter-spacing:0.136px">Valid</span><span class="tx" style="left:338.50px;top:189px;font-size:11px;line-height:12px;color:#fff;font-weight:normal;letter-spacing:0.156px">Mailbox exists</span><span class="tx" style="left:488.50px;top:189px;font-size:11px;line-height:12px;color:#fff;font-weight:normal;letter-spacing:-0.278px">250 OK x1...</span><span class="tx" style="left:563.25px;top:189px;font-size:11px;line-height:12px;color:#fff;font-weight:normal;letter-spacing:0.066px">Ricardo</span>
<span class="tx" style="left:26.50px;top:207px;font-size:11px;line-height:12px;color:#000;font-weight:normal;letter-spacing:0.046px">debramccree704@gmail.com</span><span class="tx" style="left:226.25px;top:207px;font-size:11px;line-height:12px;color:#000;font-weight:normal;letter-spacing:0.136px">Valid</span><span class="tx" style="left:338.50px;top:207px;font-size:11px;line-height:12px;color:#000;font-weight:normal;letter-spacing:0.156px">Mailbox exists</span><span class="tx" style="left:488.50px;top:207px;font-size:11px;line-height:12px;color:#000;font-weight:normal;letter-spacing:-0.151px">250 OK h2...</span><span class="tx" style="left:563.25px;top:207px;font-size:11px;line-height:12px;color:#000;font-weight:normal;letter-spacing:0.008px">Debra</span>
<span class="tx" style="left:26.50px;top:225px;font-size:11px;line-height:12px;color:#000;font-weight:normal;letter-spacing:0.384px">olionoyoungyen@gmail.com</span><span class="tx" style="left:226.25px;top:225px;font-size:11px;line-height:12px;color:#000;font-weight:normal;letter-spacing:0.136px">Valid</span><span class="tx" style="left:338.50px;top:225px;font-size:11px;line-height:12px;color:#000;font-weight:normal;letter-spacing:0.156px">Mailbox exists</span><span class="tx" style="left:488.50px;top:225px;font-size:11px;line-height:12px;color:#000;font-weight:normal;letter-spacing:-0.224px">250 OK 39...</span><span class="tx" style="left:563.25px;top:225px;font-size:11px;line-height:12px;color:#000;font-weight:normal;letter-spacing:-0.478px">Jeri</span>
<span class="tx" style="left:26.50px;top:243px;font-size:11px;line-height:12px;color:#000;font-weight:normal;letter-spacing:0.073px">mcorral0330@gmail.com</span><span class="tx" style="left:226.25px;top:243px;font-size:11px;line-height:12px;color:#000;font-weight:normal;letter-spacing:0.136px">Valid</span><span class="tx" style="left:338.50px;top:243px;font-size:11px;line-height:12px;color:#000;font-weight:normal;letter-spacing:0.156px">Mailbox exists</span><span class="tx" style="left:488.50px;top:243px;font-size:11px;line-height:12px;color:#000;font-weight:normal;letter-spacing:-0.151px">250 OK u1...</span><span class="tx" style="left:563.25px;top:243px;font-size:11px;line-height:12px;color:#000;font-weight:normal;letter-spacing:0.275px">Marty</span>
<span class="tx" style="left:26.50px;top:261px;font-size:11px;line-height:12px;color:#000;font-weight:normal;letter-spacing:0.165px">cubancigar789@gmail.com</span><span class="tx" style="left:226.25px;top:261px;font-size:11px;line-height:12px;color:#000;font-weight:normal;letter-spacing:0.136px">Valid</span><span class="tx" style="left:338.50px;top:261px;font-size:11px;line-height:12px;color:#000;font-weight:normal;letter-spacing:0.156px">Mailbox exists</span><span class="tx" style="left:488.50px;top:261px;font-size:11px;line-height:12px;color:#000;font-weight:normal;letter-spacing:-0.187px">250 OK k1...</span><span class="tx" style="left:563.25px;top:261px;font-size:11px;line-height:12px;color:#000;font-weight:normal;letter-spacing:-0.683px">Jose</span>
<span class="tx" style="left:26.50px;top:279px;font-size:11px;line-height:12px;color:#000;font-weight:normal;letter-spacing:0.312px">kluttztr@gmail.com</span><span class="tx" style="left:226.25px;top:279px;font-size:11px;line-height:12px;color:#000;font-weight:normal;letter-spacing:0.136px">Valid</span><span class="tx" style="left:338.50px;top:279px;font-size:11px;line-height:12px;color:#000;font-weight:normal;letter-spacing:0.156px">Mailbox exists</span><span class="tx" style="left:488.50px;top:279px;font-size:11px;line-height:12px;color:#000;font-weight:normal;letter-spacing:-0.151px">250 OK o6...</span><span class="tx" style="left:563.25px;top:279px;font-size:11px;line-height:12px;color:#000;font-weight:normal;letter-spacing:-0.540px">Tanya</span>
<span class="tx" style="left:26.50px;top:297px;font-size:11px;line-height:12px;color:#000;font-weight:normal;letter-spacing:0.302px">dizonannielyn@gmail.com</span><span class="tx" style="left:226.25px;top:297px;font-size:11px;line-height:12px;color:#000;font-weight:normal;letter-spacing:0.136px">Valid</span><span class="tx" style="left:338.50px;top:297px;font-size:11px;line-height:12px;color:#000;font-weight:normal;letter-spacing:0.156px">Mailbox exists</span><span class="tx" style="left:488.50px;top:297px;font-size:11px;line-height:12px;color:#000;font-weight:normal;letter-spacing:-0.278px">250 OK v1...</span><span class="tx" style="left:563.25px;top:297px;font-size:11px;line-height:12px;color:#000;font-weight:normal;letter-spacing:0.265px">Annie</span>
<span class="tx" style="left:26.50px;top:315px;font-size:11px;line-height:12px;color:#000;font-weight:normal;letter-spacing:0.291px">negettings@gmail.com</span><span class="tx" style="left:226.25px;top:315px;font-size:11px;line-height:12px;color:#000;font-weight:normal;letter-spacing:0.136px">Valid</span><span class="tx" style="left:338.50px;top:315px;font-size:11px;line-height:12px;color:#000;font-weight:normal;letter-spacing:0.156px">Mailbox exists</span><span class="tx" style="left:488.50px;top:315px;font-size:11px;line-height:12px;color:#000;font-weight:normal;letter-spacing:-0.224px">250 OK 20...</span><span class="tx" style="left:563.25px;top:315px;font-size:11px;line-height:12px;color:#000;font-weight:normal;letter-spacing:0.104px">Nicole</span>
<span class="tx" style="left:26.50px;top:333px;font-size:11px;line-height:12px;color:#000;font-weight:normal;letter-spacing:0.280px">kingking3381@gmail.com</span><span class="tx" style="left:226.25px;top:333px;font-size:11px;line-height:12px;color:#000;font-weight:normal;letter-spacing:0.136px">Valid</span><span class="tx" style="left:338.50px;top:333px;font-size:11px;line-height:12px;color:#000;font-weight:normal;letter-spacing:0.156px">Mailbox exists</span><span class="tx" style="left:488.50px;top:333px;font-size:11px;line-height:12px;color:#000;font-weight:normal;letter-spacing:-0.151px">250 OK b2...</span><span class="tx" style="left:563.25px;top:333px;font-size:11px;line-height:12px;color:#000;font-weight:normal;letter-spacing:-0.730px">Leo</span>
<span class="tx" style="left:26.50px;top:351px;font-size:11px;line-height:12px;color:#000;font-weight:normal;letter-spacing:0.305px">brainarddanielle@gmail.com</span><span class="tx" style="left:226.25px;top:351px;font-size:11px;line-height:12px;color:#000;font-weight:normal;letter-spacing:0.136px">Valid</span><span class="tx" style="left:338.50px;top:351px;font-size:11px;line-height:12px;color:#000;font-weight:normal;letter-spacing:0.156px">Mailbox exists</span><span class="tx" style="left:488.50px;top:351px;font-size:11px;line-height:12px;color:#000;font-weight:normal;letter-spacing:-0.137px">250 OK t8...</span><span class="tx" style="left:563.25px;top:351px;font-size:11px;line-height:12px;color:#000;font-weight:normal;letter-spacing:0.207px">Danielle</span>
<span class="tx" style="left:26.50px;top:369px;font-size:11px;line-height:12px;color:#000;font-weight:normal;letter-spacing:0.503px">uggtyuhhhhhhh@gmail.com</span><span class="tx" style="left:226.25px;top:369px;font-size:11px;line-height:12px;color:#000;font-weight:normal;letter-spacing:0.217px">Invalid</span><span class="tx" style="left:338.50px;top:369px;font-size:11px;line-height:12px;color:#000;font-weight:normal;letter-spacing:0.303px">Mailbox does not exist</span><span class="tx" style="left:488.50px;top:369px;font-size:11px;line-height:12px;color:#000;font-weight:normal;letter-spacing:-0.247px">550 The e...</span><span class="tx" style="left:563.25px;top:369px;font-size:11px;line-height:12px;color:#000;font-weight:normal;letter-spacing:0.492px">Hihn</span>
<span class="tx" style="left:26.50px;top:387px;font-size:11px;line-height:12px;color:#000;font-weight:normal;letter-spacing:0.051px">mrakins21.ca@gmail.com</span><span class="tx" style="left:226.25px;top:387px;font-size:11px;line-height:12px;color:#000;font-weight:normal;letter-spacing:0.217px">Invalid</span><span class="tx" style="left:338.50px;top:387px;font-size:11px;line-height:12px;color:#000;font-weight:normal;letter-spacing:0.303px">Mailbox does not exist</span><span class="tx" style="left:488.50px;top:387px;font-size:11px;line-height:12px;color:#000;font-weight:normal;letter-spacing:-0.247px">550 The e...</span><span class="tx" style="left:563.25px;top:387px;font-size:11px;line-height:12px;color:#000;font-weight:normal;letter-spacing:0.384px">Christopher</span>
<span class="tx" style="left:26.50px;top:405px;font-size:11px;line-height:12px;color:#000;font-weight:normal;letter-spacing:0.145px">elmenol1090@gmail.com</span><span class="tx" style="left:226.25px;top:405px;font-size:11px;line-height:12px;color:#000;font-weight:normal;letter-spacing:0.217px">Invalid</span><span class="tx" style="left:338.50px;top:405px;font-size:11px;line-height:12px;color:#000;font-weight:normal;letter-spacing:0.303px">Mailbox does not exist</span><span class="tx" style="left:488.50px;top:405px;font-size:11px;line-height:12px;color:#000;font-weight:normal;letter-spacing:-0.247px">550 The e...</span><span class="tx" style="left:563.25px;top:405px;font-size:11px;line-height:12px;color:#000;font-weight:normal;letter-spacing:-0.329px">Joel</span>
<span class="tx" style="left:26.50px;top:423px;font-size:11px;line-height:12px;color:#000;font-weight:normal;letter-spacing:0.197px">eeron@gmail.com</span><span class="tx" style="left:226.25px;top:423px;font-size:11px;line-height:12px;color:#000;font-weight:normal;letter-spacing:0.217px">Invalid</span><span class="tx" style="left:338.50px;top:423px;font-size:11px;line-height:12px;color:#000;font-weight:normal;letter-spacing:0.303px">Mailbox does not exist</span><span class="tx" style="left:488.50px;top:423px;font-size:11px;line-height:12px;color:#000;font-weight:normal;letter-spacing:-0.247px">550 The e...</span><span class="tx" style="left:563.25px;top:423px;font-size:11px;line-height:12px;color:#000;font-weight:normal;letter-spacing:-0.040px">Eeron</span>
<span class="tx" style="left:26.50px;top:441px;font-size:11px;line-height:12px;color:#000;font-weight:normal;letter-spacing:0.234px">anhony@gmail.com</span><span class="tx" style="left:226.25px;top:441px;font-size:11px;line-height:12px;color:#000;font-weight:normal;letter-spacing:0.217px">Invalid</span><span class="tx" style="left:338.50px;top:441px;font-size:11px;line-height:12px;color:#000;font-weight:normal;letter-spacing:0.303px">Mailbox does not exist</span><span class="tx" style="left:488.50px;top:441px;font-size:11px;line-height:12px;color:#000;font-weight:normal;letter-spacing:-0.247px">550 The e...</span><span class="tx" style="left:563.25px;top:441px;font-size:11px;line-height:12px;color:#000;font-weight:normal;letter-spacing:-0.234px">Any</span>
<span class="tx" style="left:26.50px;top:459px;font-size:11px;line-height:12px;color:#000;font-weight:normal;letter-spacing:0.153px">arrirllayne01@gmail.com</span><span class="tx" style="left:226.25px;top:459px;font-size:11px;line-height:12px;color:#000;font-weight:normal;letter-spacing:0.217px">Invalid</span><span class="tx" style="left:338.50px;top:459px;font-size:11px;line-height:12px;color:#000;font-weight:normal;letter-spacing:0.303px">Mailbox does not exist</span><span class="tx" style="left:488.50px;top:459px;font-size:11px;line-height:12px;color:#000;font-weight:normal;letter-spacing:-0.247px">550 The e...</span><span class="tx" style="left:563.25px;top:459px;font-size:11px;line-height:12px;color:#000;font-weight:normal;letter-spacing:0.126px">Arriel</span>
<span class="tx" style="left:26.50px;top:477px;font-size:11px;line-height:12px;color:#000;font-weight:normal;letter-spacing:0.335px">marwin9611@tt.net</span><span class="tx" style="left:226.25px;top:477px;font-size:11px;line-height:12px;color:#000;font-weight:normal;letter-spacing:0.217px">Invalid</span><span class="tx" style="left:338.50px;top:477px;font-size:11px;line-height:12px;color:#000;font-weight:normal;letter-spacing:0.303px">Mailbox does not exist</span><span class="tx" style="left:488.50px;top:477px;font-size:11px;line-height:12px;color:#000;font-weight:normal;letter-spacing:-0.096px">550 No Su...</span><span class="tx" style="left:563.25px;top:477px;font-size:11px;line-height:12px;color:#000;font-weight:normal;letter-spacing:0.277px">Marvin</span>
<span class="tx" style="left:26.50px;top:495px;font-size:11px;line-height:12px;color:#000;font-weight:normal;letter-spacing:-0.116px">maryc@ccrny.com</span><span class="tx" style="left:226.25px;top:495px;font-size:11px;line-height:12px;color:#000;font-weight:normal;letter-spacing:0.217px">Invalid</span><span class="tx" style="left:338.50px;top:495px;font-size:11px;line-height:12px;color:#000;font-weight:normal;letter-spacing:0.263px">Domain does not exist</span><span class="tx" style="left:563.25px;top:495px;font-size:11px;line-height:12px;color:#000;font-weight:normal;letter-spacing:-0.051px">Mary</span>
<span class="tx" style="left:26.50px;top:513px;font-size:11px;line-height:12px;color:#000;font-weight:normal;letter-spacing:0.335px">winniejoslin118@yanoo.com</span><span class="tx" style="left:226.25px;top:513px;font-size:11px;line-height:12px;color:#000;font-weight:normal;letter-spacing:0.217px">Invalid</span><span class="tx" style="left:338.50px;top:513px;font-size:11px;line-height:12px;color:#000;font-weight:normal;letter-spacing:0.263px">Domain does not exist</span><span class="tx" style="left:563.25px;top:513px;font-size:11px;line-height:12px;color:#000;font-weight:normal;letter-spacing:0.475px">Winnie</span>
<span class="tx" style="left:26.50px;top:531px;font-size:11px;line-height:12px;color:#000;font-weight:normal;letter-spacing:0.163px">mariefairley_51@dogomania.com</span><span class="tx" style="left:226.25px;top:531px;font-size:11px;line-height:12px;color:#000;font-weight:normal;letter-spacing:0.217px">Invalid</span><span class="tx" style="left:338.50px;top:531px;font-size:11px;line-height:12px;color:#000;font-weight:normal;letter-spacing:0.303px">Mailbox does not exist</span><span class="tx" style="left:488.50px;top:531px;font-size:11px;line-height:12px;color:#000;font-weight:normal;letter-spacing:-0.021px">550 No su...</span><span class="tx" style="left:563.25px;top:531px;font-size:11px;line-height:12px;color:#000;font-weight:normal;letter-spacing:0.171px">Marie</span>
<span class="tx" style="left:26.50px;top:549px;font-size:11px;line-height:12px;color:#000;font-weight:normal;letter-spacing:0.131px">missnaranjo0203@gmail.com</span><span class="tx" style="left:226.25px;top:549px;font-size:11px;line-height:12px;color:#000;font-weight:normal;letter-spacing:0.217px">Invalid</span><span class="tx" style="left:338.50px;top:549px;font-size:11px;line-height:12px;color:#000;font-weight:normal;letter-spacing:0.303px">Mailbox does not exist</span><span class="tx" style="left:488.50px;top:549px;font-size:11px;line-height:12px;color:#000;font-weight:normal;letter-spacing:-0.247px">550 The e...</span><span class="tx" style="left:563.25px;top:549px;font-size:11px;line-height:12px;color:#000;font-weight:normal;letter-spacing:-0.956px">Jazzy</span>
<span class="tx" style="left:26.50px;top:567px;font-size:11px;line-height:12px;color:#000;font-weight:normal;letter-spacing:0.190px">moisesalfaro18@hotmail.com</span><span class="tx" style="left:226.25px;top:567px;font-size:11px;line-height:12px;color:#000;font-weight:normal;letter-spacing:0.290px">Uncertain</span><span class="tx" style="left:338.50px;top:567px;font-size:11px;line-height:12px;color:#000;font-weight:normal;letter-spacing:0.072px">IP-address has been bloc...</span><span class="tx" style="left:488.50px;top:567px;font-size:11px;line-height:12px;color:#000;font-weight:normal;letter-spacing:0.219px">A rule for ...</span><span class="tx" style="left:563.25px;top:567px;font-size:11px;line-height:12px;color:#000;font-weight:normal;letter-spacing:0.031px">Moises</span>
<span class="tx" style="left:26.50px;top:585px;font-size:11px;line-height:12px;color:#000;font-weight:normal;letter-spacing:0.342px">ventutet@hotmail.com</span><span class="tx" style="left:226.25px;top:585px;font-size:11px;line-height:12px;color:#000;font-weight:normal;letter-spacing:0.290px">Uncertain</span><span class="tx" style="left:338.50px;top:585px;font-size:11px;line-height:12px;color:#000;font-weight:normal;letter-spacing:0.072px">IP-address has been bloc...</span><span class="tx" style="left:488.50px;top:585px;font-size:11px;line-height:12px;color:#000;font-weight:normal;letter-spacing:0.219px">A rule for ...</span><span class="tx" style="left:563.25px;top:585px;font-size:11px;line-height:12px;color:#000;font-weight:normal;letter-spacing:0.073px">Eugene</span>
<span class="tx" style="left:26.50px;top:603px;font-size:11px;line-height:12px;color:#000;font-weight:normal;letter-spacing:0.371px">dandrueppel@hotmail.com</span><span class="tx" style="left:226.25px;top:603px;font-size:11px;line-height:12px;color:#000;font-weight:normal;letter-spacing:0.290px">Uncertain</span><span class="tx" style="left:338.50px;top:603px;font-size:11px;line-height:12px;color:#000;font-weight:normal;letter-spacing:0.072px">IP-address has been bloc...</span><span class="tx" style="left:488.50px;top:603px;font-size:11px;line-height:12px;color:#000;font-weight:normal;letter-spacing:0.219px">A rule for ...</span><span class="tx" style="left:563.25px;top:603px;font-size:11px;line-height:12px;color:#000;font-weight:normal;letter-spacing:0.006px">Dan</span>
<span class="tx" style="left:26.50px;top:621px;font-size:11px;line-height:12px;color:#000;font-weight:normal;letter-spacing:0.224px">suthernbelle4555@yahoo.com</span><span class="tx" style="left:226.25px;top:621px;font-size:11px;line-height:12px;color:#000;font-weight:normal;letter-spacing:0.290px">Uncertain</span><span class="tx" style="left:338.50px;top:621px;font-size:11px;line-height:12px;color:#000;font-weight:normal;letter-spacing:0.087px">Server is temporarily una...</span><span class="tx" style="left:488.50px;top:621px;font-size:11px;line-height:12px;color:#000;font-weight:normal;letter-spacing:0.219px">A rule for ...</span><span class="tx" style="left:563.25px;top:621px;font-size:11px;line-height:12px;color:#000;font-weight:normal;letter-spacing:-0.041px">Jeannie</span>
<span class="tx" style="left:26.50px;top:639px;font-size:11px;line-height:12px;color:#000;font-weight:normal;letter-spacing:0.004px">lvmay03@yahoo.com</span><span class="tx" style="left:226.25px;top:639px;font-size:11px;line-height:12px;color:#000;font-weight:normal;letter-spacing:0.290px">Uncertain</span><span class="tx" style="left:338.50px;top:639px;font-size:11px;line-height:12px;color:#000;font-weight:normal;letter-spacing:0.087px">Server is temporarily una...</span><span class="tx" style="left:488.50px;top:639px;font-size:11px;line-height:12px;color:#000;font-weight:normal;letter-spacing:0.219px">A rule for ...</span><span class="tx" style="left:563.25px;top:639px;font-size:11px;line-height:12px;color:#000;font-weight:normal;letter-spacing:-0.096px">Elaine</span>
<span class="tx" style="left:26.50px;top:657px;font-size:11px;line-height:12px;color:#000;font-weight:normal;letter-spacing:0.282px">jenifawn@rocketmail.com</span><span class="tx" style="left:226.25px;top:657px;font-size:11px;line-height:12px;color:#000;font-weight:normal;letter-spacing:0.290px">Uncertain</span><span class="tx" style="left:338.50px;top:657px;font-size:11px;line-height:12px;color:#000;font-weight:normal;letter-spacing:0.087px">Server is temporarily una...</span><span class="tx" style="left:488.50px;top:657px;font-size:11px;line-height:12px;color:#000;font-weight:normal;letter-spacing:-0.514px">421 [TSS04...</span><span class="tx" style="left:563.25px;top:657px;font-size:11px;line-height:12px;color:#000;font-weight:normal;letter-spacing:0.223px">Jennifer</span>
<span class="tx" style="left:26.50px;top:675px;font-size:11px;line-height:12px;color:#000;font-weight:normal;letter-spacing:0.370px">bgiuliano51@icloud.com</span><span class="tx" style="left:226.25px;top:675px;font-size:11px;line-height:12px;color:#000;font-weight:normal;letter-spacing:0.290px">Uncertain</span><span class="tx" style="left:338.50px;top:675px;font-size:11px;line-height:12px;color:#000;font-weight:normal;letter-spacing:0.072px">IP-address has been bloc...</span><span class="tx" style="left:488.50px;top:675px;font-size:11px;line-height:12px;color:#000;font-weight:normal;letter-spacing:0.160px">550 Mail fr...</span><span class="tx" style="left:563.25px;top:675px;font-size:11px;line-height:12px;color:#000;font-weight:normal;letter-spacing:0.153px">Bette</span>
<div id="vs" class="abs"><svg class="a" style="left:0;top:0" width="16" height="506" viewBox="0 0 16 506"><path d="M4 11.2 L7.5 7.6 L11 11.2 M4 494.6 L7.5 498.2 L11 494.6" stroke="#555" stroke-width="1.9" fill="none"/><rect x="0" y="215" width="15" height="17" fill="#cdcdcd"/></svg></div>
<div id="hs" class="abs"><svg class="a" style="left:0;top:0" width="669" height="16" viewBox="0 0 669 16"><rect x="17" y="0" width="137" height="15" fill="#cdcdcd"/><path d="M10 4.3 L6.4 7.8 L10 11.3 M642 4.3 L645.6 7.8 L642 11.3" stroke="#555" stroke-width="1.9" fill="none"/></svg></div>
<div class="abs" style="left:669px;top:169px;width:1px;height:539px;background:#eef4fc"></div>
<!--stats-->
<div class="bar lav" style="top:176px"></div>
<div class="bar" style="top:202px"><i class="grn" style="width:107px"></i></div>
<div class="bar" style="top:223px"><i style="width:2px;background:#f3a6a6"></i></div>
<div class="bar" style="top:243px"><i class="yel" style="width:135px"></i></div>
<div class="bar" style="top:263px"><i style="width:2px;background:#f6b47c"></i></div>
<div class="bar lav" style="top:288px"></div>
<span class="tx" style="left:674.50px;top:177px;font-size:12px;line-height:14px;color:#000;font-weight:normal;letter-spacing:-0.532px">Progress:</span><span class="tx" style="left:775.50px;top:177px;font-size:12px;line-height:14px;color:#000;font-weight:normal;letter-spacing:-0.779px">100.50%</span><span class="tx" style="left:890.75px;top:177px;font-size:12px;line-height:14px;color:#000;font-weight:normal;letter-spacing:-0.133px">0/997</span>
<span class="tx" style="left:674.50px;top:203px;font-size:12px;line-height:14px;color:#000;font-weight:normal;letter-spacing:-0.428px">Valid:</span><span class="tx" style="left:778.00px;top:203px;font-size:12px;line-height:14px;color:#000;font-weight:normal;letter-spacing:-0.681px">43.43%</span><span class="tx" style="left:902.00px;top:203px;font-size:12px;line-height:14px;color:#000;font-weight:normal;letter-spacing:-0.916px">433</span>
<span class="tx" style="left:675.00px;top:224px;font-size:12px;line-height:14px;color:#000;font-weight:normal;letter-spacing:-0.204px">Invalid:</span><span class="tx" style="left:781.75px;top:224px;font-size:12px;line-height:14px;color:#000;font-weight:normal;letter-spacing:-0.983px">1.10%</span><span class="tx" style="left:908.75px;top:224px;font-size:12px;line-height:14px;color:#000;font-weight:normal;letter-spacing:-0.969px">11</span>
<span class="tx" style="left:674.50px;top:244px;font-size:12px;line-height:14px;color:#000;font-weight:normal;letter-spacing:-0.145px">Uncertain:</span><span class="tx" style="left:778.25px;top:244px;font-size:12px;line-height:14px;color:#000;font-weight:normal;letter-spacing:-0.741px">55.27%</span><span class="tx" style="left:902.00px;top:244px;font-size:12px;line-height:14px;color:#000;font-weight:normal;letter-spacing:-0.916px">551</span>
<span class="tx" style="left:675.00px;top:264px;font-size:12px;line-height:14px;color:#000;font-weight:normal;letter-spacing:-0.320px">Disposable:</span><span class="tx" style="left:781.00px;top:264px;font-size:12px;line-height:14px;color:#000;font-weight:normal;letter-spacing:-0.783px">0.20%</span><span class="tx" style="left:913.50px;top:264px;font-size:12px;line-height:14px;color:#000;font-weight:normal;letter-spacing:0.000px">2</span>
<span class="tx" style="left:674.50px;top:289px;font-size:12px;line-height:14px;color:#000;font-weight:normal;letter-spacing:-0.141px">Time:</span><span class="tx" style="left:751.75px;top:289px;font-size:12px;line-height:14px;color:#000;font-weight:normal;letter-spacing:-0.529px">00:00:42/00:00:00</span>
<span class="tx" style="left:675.50px;top:320px;font-size:11px;line-height:12px;color:#000;font-weight:normal;letter-spacing:0.154px">Checking email list...</span>
<span class="tx" style="left:684.25px;top:339px;font-size:11px;line-height:12px;color:#000;font-weight:normal;letter-spacing:-0.064px">Syntax check...</span>
<span class="tx" style="left:684.25px;top:354px;font-size:11px;line-height:12px;color:#000;font-weight:normal;letter-spacing:0.294px">0 emails with wrong syntax</span>
<span class="tx" style="left:684.25px;top:381px;font-size:11px;line-height:12px;color:#000;font-weight:normal;letter-spacing:0.063px">Disposable email checks...</span>
<span class="tx" style="left:684.25px;top:396px;font-size:11px;line-height:12px;color:#000;font-weight:normal;letter-spacing:0.121px">2 disposable emails</span>
<span class="tx" style="left:684.25px;top:426px;font-size:11px;line-height:12px;color:#000;font-weight:normal;letter-spacing:0.006px">Checking DNS...</span>
<span class="tx" style="left:684.25px;top:442px;font-size:11px;line-height:12px;color:#000;font-weight:normal;letter-spacing:0.209px">2 emails with incorrect MX record</span>
<span class="tx" style="left:684.25px;top:469px;font-size:11px;line-height:12px;color:#000;font-weight:normal;letter-spacing:-0.350px">SMTP ckeck...</span>
<span class="tx" style="left:684.25px;top:484px;font-size:11px;line-height:12px;color:#000;font-weight:normal;letter-spacing:0.198px">9 invalid (abandoned) emails</span>
</body></html>
